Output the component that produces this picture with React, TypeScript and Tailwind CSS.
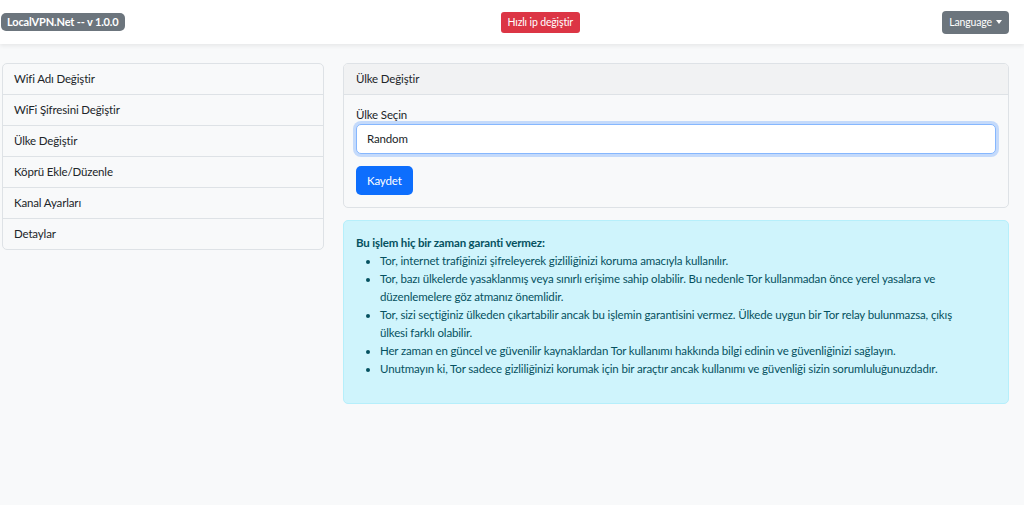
import React from 'react';

const menuItems = [
  'Wifi Adı Değiştir',
  'WiFi Şifresini Değiştir',
  'Ülke Değiştir',
  'Köprü Ekle/Düzenle',
  'Kanal Ayarları',
  'Detaylar',
];

const notes = [
  'Tor, internet trafiğinizi şifreleyerek gizliliğinizi koruma amacıyla kullanılır.',
  'Tor, bazı ülkelerde yasaklanmış veya sınırlı erişime sahip olabilir. Bu nedenle Tor kullanmadan önce yerel yasalara ve düzenlemelere göz atmanız önemlidir.',
  'Tor, sizi seçtiğiniz ülkeden çıkartabilir ancak bu işlemin garantisini vermez. Ülkede uygun bir Tor relay bulunmazsa, çıkış ülkesi farklı olabilir.',
  'Her zaman en güncel ve güvenilir kaynaklardan Tor kullanımı hakkında bilgi edinin ve güvenliğinizi sağlayın.',
  'Unutmayın ki, Tor sadece gizliliğinizi korumak için bir araçtır ancak kullanımı ve güvenliği sizin sorumluluğunuzdadır.',
];

export default function App() {
  return (
    <div className="min-h-screen bg-[#f8f9fa] text-[11.5px] leading-[18px] tracking-[-0.15px] text-[#212529] font-['Lato','Noto_Sans',sans-serif]">
      {/* Navbar */}
      <nav className="h-[44px] bg-white shadow-[0_2px_4px_rgba(0,0,0,0.07)] flex items-center pl-[1px] pr-[15px]">
        <span className="bg-[#6c757d] text-white font-bold text-[11px] leading-[18px] px-[6px] rounded-[5px]">
          LocalVPN.Net -- v 1.0.0
        </span>
        <button className="ml-[376px] bg-[#dc3545] text-white text-[10.5px] leading-[19px] px-[7px] py-[1px] rounded-[3px]">
          Hızlı ip değiştir
        </button>
        <button className="ml-auto bg-[#6c757d] text-white text-[10.5px] leading-[19px] px-[7px] py-[2px] rounded-[4px] flex items-center gap-[4px]">
          Language
          <span className="w-0 h-0 border-l-[3px] border-r-[3px] border-t-[4px] border-l-transparent border-r-transparent border-t-white" />
        </button>
      </nav>

      <div className="flex gap-[19px] pl-[2px] pr-[15px] pt-[19px]">
        {/* Sidebar */}
        <div className="w-[322px] shrink-0">
          <div className="border border-[#dee2e6] rounded-[5px] overflow-hidden">
            {menuItems.map((item, i) => (
              <div
                key={item}
                className={`px-[11px] py-[6px] ${i > 0 ? 'border-t border-[#dee2e6]' : ''}`}
              >
                {item}
              </div>
            ))}
          </div>
        </div>

        {/* Main */}
        <div className="flex-1 flex flex-col gap-[12px]">
          <div className="border border-[#dee2e6] rounded-[5px] overflow-hidden">
            <div className="bg-[#f1f2f3] border-b border-[#dee2e6] px-[12px] py-[6px]">Ülke Değiştir</div>
            <div className="p-[12px]">
              <div className="mb-[1px] leading-[16px]">Ülke Seçin</div>
              <div className="h-[30px] bg-white border border-[#86b7fe] rounded-[5px] shadow-[0_0_0_3px_rgba(13,110,253,0.22)] flex items-center px-[10px]">
                Random
              </div>
              <button className="mt-[12px] h-[29px] px-[11px] bg-[#0d6efd] text-white rounded-[5px]">Kaydet</button>
            </div>
          </div>

          <div className="bg-[#cff4fc] border border-[#b6effb] rounded-[5px] text-[#055160] px-[12px] pt-[13px] pb-[13px]">
            <div className="font-bold">Bu işlem hiç bir zaman garanti vermez:</div>
            <ul className="list-disc pl-[24px] pr-[22px] mb-[12px]">
              {notes.map((n) => (
                <li key={n}>{n}</li>
              ))}
            </ul>
          </div>
        </div>
      </div>
    </div>
  );
}
